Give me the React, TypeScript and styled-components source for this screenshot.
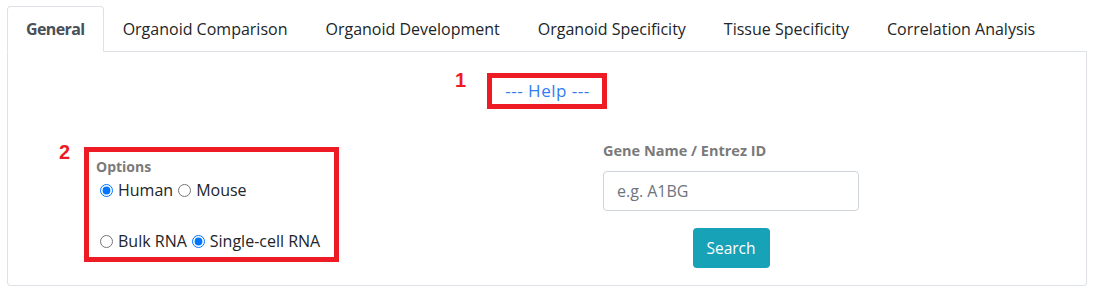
import React from "react";
import styled, { createGlobalStyle } from "styled-components";

const GlobalStyle = createGlobalStyle`
  html, body { margin: 0; padding: 0; background: #fff; }
  body { font-family: "Open Sans", "Noto Sans", Arial, sans-serif; color: #212529; }
  * { box-sizing: border-box; }
`;

const Page = styled.div`
  padding: 6px 7px 0 7px;
  width: 1094px;
`;

const TabBar = styled.ul`
  display: flex;
  list-style: none;
  margin: 0;
  padding: 0;
  border-bottom: 1px solid #dee2e6;
`;

const Tab = styled.li<{ $active?: boolean }>`
  margin-bottom: -1px;
  padding: 9px 18px;
  font-size: 16px;
  line-height: 26px;
  white-space: nowrap;
  border: 1px solid transparent;
  border-radius: 4px 4px 0 0;
  color: ${(p) => (p.$active ? "#495057" : "#212529")};
  font-weight: ${(p) => (p.$active ? 700 : 400)};
  letter-spacing: ${(p) => (p.$active ? "-0.6px" : "0")};
  background: ${(p) => (p.$active ? "#fff" : "transparent")};
  border-color: ${(p) => (p.$active ? "#dee2e6 #dee2e6 #fff" : "transparent")};
`;

const Panel = styled.div`
  width: 1080px;
  border: 1px solid #dee2e6;
  border-top: none;
  border-radius: 0 0 4px 4px;
  padding: 21px 0 17px 0;
`;

const HelpRow = styled.div`
  display: flex;
  justify-content: center;
`;

const Annotated = styled.div`
  position: relative;
  display: inline-block;
`;

const Marker = styled.span<{ $gap: number; $top: number }>`
  position: absolute;
  right: calc(100% + ${(p) => p.$gap}px);
  top: ${(p) => p.$top}px;
  font-family: "Liberation Sans", Arial, sans-serif;
  font-weight: 700;
  font-size: 20px;
  line-height: 20px;
  color: #ed1c24;
`;

const HelpBox = styled.a`
  display: block;
  width: 120px;
  height: 36px;
  border: 5px solid #ed1c24;
  text-align: center;
  padding-left: 1px;
  font-size: 17px;
  line-height: 26px;
  letter-spacing: 0.5px;
  color: #2f7cf6;
  text-decoration: none;
  cursor: pointer;
`;

const MainRow = styled.div`
  display: flex;
  align-items: flex-start;
  margin-top: 31px;
  padding-left: 76px;
`;

const OptionsBox = styled.div`
  width: 255px;
  margin-top: 7px;
  border: 5px solid #ed1c24;
  padding: 4px 8px 4px 7px;
`;

const GroupLabel = styled.div`
  font-size: 14px;
  line-height: 21px;
  font-weight: 700;
  color: #7a7a7a;
`;

const RadioRow = styled.div<{ $space: number }>`
  display: flex;
  align-items: center;
  height: 24px;
  margin-top: ${(p) => p.$space}px;
  padding-left: 4px;
`;

const RadioOption = styled.label`
  display: flex;
  align-items: center;
  font-size: 16px;
  line-height: 24px;
  color: #212529;
  white-space: nowrap;
  & + & { margin-left: 5px; }
`;

const Radio = styled.input`
  width: 13px;
  height: 13px;
  margin: 0 5px 0 0;
  accent-color: #0075ff;
`;

const SearchColumn = styled.div`
  width: 256px;
  margin-left: 264px;
  display: flex;
  flex-direction: column;
`;

const FieldLabel = styled.label`
  font-size: 14.5px;
  line-height: 22px;
  font-weight: 700;
  color: #7a7a7a;
`;

const TextInput = styled.input`
  margin-top: 9px;
  width: 256px;
  height: 40px;
  border: 1px solid #ced4da;
  border-radius: 4px;
  padding: 0 13px;
  font-family: inherit;
  font-size: 16px;
  color: #495057;
  &::placeholder { color: #6c757d; }
`;

const SearchButton = styled.button`
  margin-top: 17px;
  align-self: center;
  width: 77px;
  height: 40px;
  border: none;
  border-radius: 4px;
  background: #17a2b8;
  color: #fff;
  font-family: inherit;
  font-size: 15.5px;
  cursor: pointer;
`;

const tabs = [
  "General",
  "Organoid Comparison",
  "Organoid Development",
  "Organoid Specificity",
  "Tissue Specificity",
  "Correlation Analysis",
];

export default function App() {
  const [species, setSpecies] = React.useState("human");
  const [kind, setKind] = React.useState("single");
  return (
    <>
      <GlobalStyle />
      <Page>
        <TabBar>
          {tabs.map((t, i) => (
            <Tab key={t} $active={i === 0}>
              {t}
            </Tab>
          ))}
        </TabBar>
        <Panel>
          <HelpRow>
            <Annotated>
              <Marker $gap={21} $top={-3}>1</Marker>
              <HelpBox>--- Help ---</HelpBox>
            </Annotated>
          </HelpRow>
          <MainRow>
            <Annotated>
              <Marker $gap={14} $top={2}>2</Marker>
              <OptionsBox>
                <GroupLabel>Options</GroupLabel>
                <RadioRow $space={1}>
                  <RadioOption>
                    <Radio type="radio" name="sp" checked={species === "human"} onChange={() => setSpecies("human")} />
                    Human
                  </RadioOption>
                  <RadioOption>
                    <Radio type="radio" name="sp" checked={species === "mouse"} onChange={() => setSpecies("mouse")} />
                    Mouse
                  </RadioOption>
                </RadioRow>
                <RadioRow $space={27}>
                  <RadioOption>
                    <Radio type="radio" name="kd" checked={kind === "bulk"} onChange={() => setKind("bulk")} />
                    Bulk RNA
                  </RadioOption>
                  <RadioOption>
                    <Radio type="radio" name="kd" checked={kind === "single"} onChange={() => setKind("single")} />
                    Single-cell RNA
                  </RadioOption>
                </RadioRow>
              </OptionsBox>
            </Annotated>
            <SearchColumn>
              <FieldLabel>Gene Name / Entrez ID</FieldLabel>
              <TextInput placeholder="e.g. A1BG" />
              <SearchButton>Search</SearchButton>
            </SearchColumn>
          </MainRow>
        </Panel>
      </Page>
    </>
  );
}
